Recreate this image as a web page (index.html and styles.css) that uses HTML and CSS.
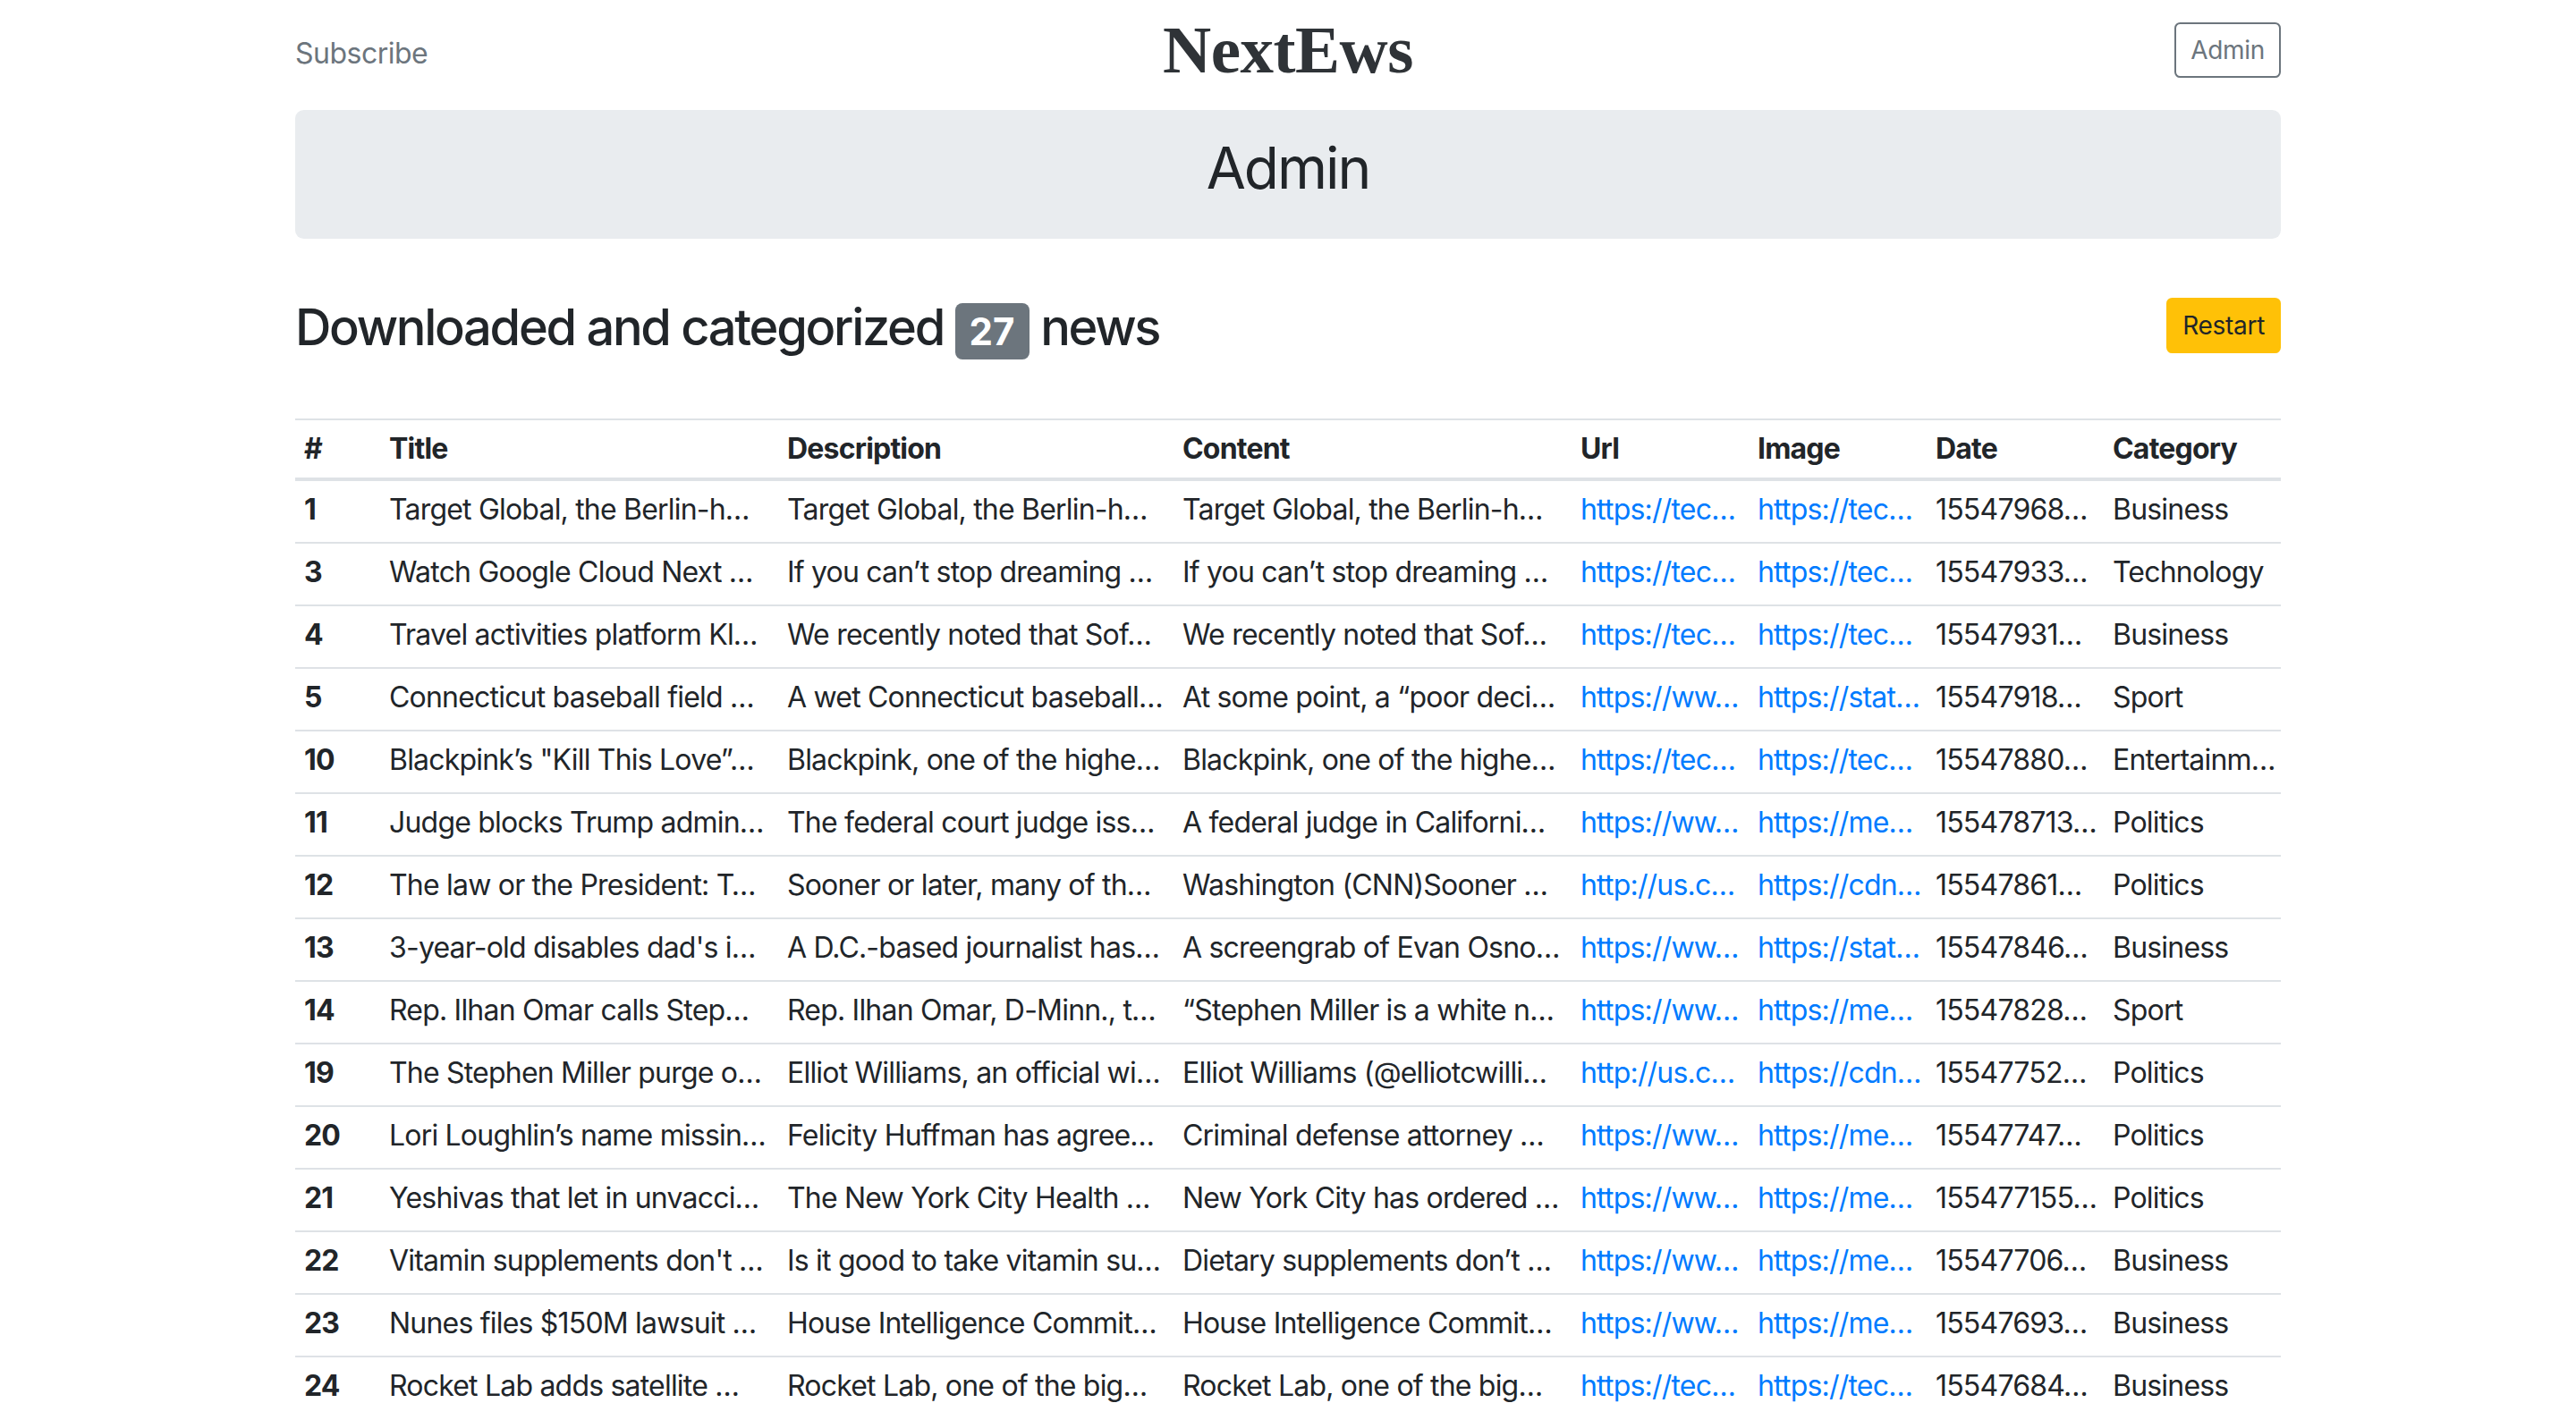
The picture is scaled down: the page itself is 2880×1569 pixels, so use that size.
FILE: index.html
```html
<!DOCTYPE html>
<html lang="en">
<head>
<meta charset="utf-8">
<title>NextEws - Admin</title>
<link rel="stylesheet" href="styles.css">
</head>
<body>
<div class="container">
  <header class="blog-header">
    <div class="header-left"><a class="subscribe" href="#">Subscribe</a></div>
    <div class="header-center"><a class="logo" href="#">NextEws</a></div>
    <div class="header-right"><a class="btn btn-outline" href="#">Admin</a></div>
  </header>

  <div class="jumbotron"><h2 class="jumbo-title">Admin</h2></div>

  <div class="toolbar">
    <h3 class="section-title">Downloaded and categorized <span class="badge">27</span> news</h3>
    <button class="btn btn-warning">Restart</button>
  </div>

  <table class="news-table">
    <colgroup>
      <col class="c-id"><col class="c-long"><col class="c-long2"><col class="c-long"><col class="c-short"><col class="c-short2"><col class="c-short"><col class="c-short">
    </colgroup>
    <thead>
      <tr><th>#</th><th>Title</th><th>Description</th><th>Content</th><th>Url</th><th>Image</th><th>Date</th><th>Category</th></tr>
    </thead>
    <tbody>
      <tr><th>1</th><td>Target Global, the Berlin-h…</td><td>Target Global, the Berlin-h…</td><td>Target Global, the Berlin-h…</td><td><a href="#">https://tec…</a></td><td><a href="#">https://tec…</a></td><td>15547968…</td><td>Business</td></tr>
      <tr><th>3</th><td>Watch Google Cloud Next …</td><td>If you can’t stop dreaming …</td><td>If you can’t stop dreaming …</td><td><a href="#">https://tec…</a></td><td><a href="#">https://tec…</a></td><td>15547933…</td><td>Technology</td></tr>
      <tr><th>4</th><td>Travel activities platform Kl…</td><td>We recently noted that Sof…</td><td>We recently noted that Sof…</td><td><a href="#">https://tec…</a></td><td><a href="#">https://tec…</a></td><td>15547931…</td><td>Business</td></tr>
      <tr><th>5</th><td>Connecticut baseball field …</td><td>A wet Connecticut baseball…</td><td>At some point, a “poor deci…</td><td><a href="#">https://ww…</a></td><td><a href="#">https://stat…</a></td><td>15547918…</td><td>Sport</td></tr>
      <tr><th>10</th><td>Blackpink’s "Kill This Love”…</td><td>Blackpink, one of the highe…</td><td>Blackpink, one of the highe…</td><td><a href="#">https://tec…</a></td><td><a href="#">https://tec…</a></td><td>15547880…</td><td>Entertainm…</td></tr>
      <tr><th>11</th><td>Judge blocks Trump admin…</td><td>The federal court judge iss…</td><td>A federal judge in Californi…</td><td><a href="#">https://ww…</a></td><td><a href="#">https://me…</a></td><td>155478713…</td><td>Politics</td></tr>
      <tr><th>12</th><td>The law or the President: T…</td><td>Sooner or later, many of th…</td><td>Washington (CNN)Sooner …</td><td><a href="#">http://us.c…</a></td><td><a href="#">https://cdn…</a></td><td>15547861…</td><td>Politics</td></tr>
      <tr><th>13</th><td>3-year-old disables dad's i…</td><td>A D.C.-based journalist has…</td><td>A screengrab of Evan Osno…</td><td><a href="#">https://ww…</a></td><td><a href="#">https://stat…</a></td><td>15547846…</td><td>Business</td></tr>
      <tr><th>14</th><td>Rep. Ilhan Omar calls Step…</td><td>Rep. Ilhan Omar, D-Minn., t…</td><td>“Stephen Miller is a white n…</td><td><a href="#">https://ww…</a></td><td><a href="#">https://me…</a></td><td>15547828…</td><td>Sport</td></tr>
      <tr><th>19</th><td>The Stephen Miller purge o…</td><td>Elliot Williams, an official wi…</td><td>Elliot Williams (@elliotcwilli…</td><td><a href="#">http://us.c…</a></td><td><a href="#">https://cdn…</a></td><td>15547752…</td><td>Politics</td></tr>
      <tr><th>20</th><td>Lori Loughlin’s name missin…</td><td>Felicity Huffman has agree…</td><td>Criminal defense attorney …</td><td><a href="#">https://ww…</a></td><td><a href="#">https://me…</a></td><td>15547747…</td><td>Politics</td></tr>
      <tr><th>21</th><td>Yeshivas that let in unvacci…</td><td>The New York City Health …</td><td>New York City has ordered …</td><td><a href="#">https://ww…</a></td><td><a href="#">https://me…</a></td><td>155477155…</td><td>Politics</td></tr>
      <tr><th>22</th><td>Vitamin supplements don't …</td><td>Is it good to take vitamin su…</td><td>Dietary supplements don’t …</td><td><a href="#">https://ww…</a></td><td><a href="#">https://me…</a></td><td>15547706…</td><td>Business</td></tr>
      <tr><th>23</th><td>Nunes files $150M lawsuit …</td><td>House Intelligence Commit…</td><td>House Intelligence Commit…</td><td><a href="#">https://ww…</a></td><td><a href="#">https://me…</a></td><td>15547693…</td><td>Business</td></tr>
      <tr><th>24</th><td>Rocket Lab adds satellite …</td><td>Rocket Lab, one of the big…</td><td>Rocket Lab, one of the big…</td><td><a href="#">https://tec…</a></td><td><a href="#">https://tec…</a></td><td>15547684…</td><td>Business</td></tr>
    </tbody>
  </table>
</div>
</body>
</html>
```

FILE: styles.css
```css
html, body {
  margin: 0;
  padding: 0;
  background: #fff;
}
body {
  font-family: Inter, "Liberation Sans", Arial, sans-serif;
  font-size: 32px;
  line-height: 1.5;
  color: #212529;
}
a {
  text-decoration: none;
}
.container {
  width: 2220px;
  margin: 0 auto;
}

/* header */
.blog-header {
  display: grid;
  grid-template-columns: 1fr 1fr 1fr;
  align-items: center;
  height: 72px;
  padding: 20px 0 31px;
  line-height: 1;
}
.header-left {
  padding-top: 8px;
}
.subscribe {
  color: #6c757d;
  font-size: 32px;
  letter-spacing: -0.5px;
}
.header-center {
  text-align: center;
}
.logo {
  font-family: "Liberation Serif", "Times New Roman", serif;
  font-size: 75px;
  line-height: 72px;
  font-weight: 700;
  color: #2f3337;
  letter-spacing: -0.5px;
}
.header-right {
  display: flex;
  justify-content: flex-end;
}
.btn {
  display: inline-block;
  font-family: Inter, "Liberation Sans", sans-serif;
  font-size: 28px;
  line-height: 42px;
  padding: 8px 16px;
  border-radius: 6.4px;
  border: 2px solid transparent;
  letter-spacing: -0.3px;
}
.btn-outline {
  color: #6c757d;
  border-color: #6c757d;
  background: #fff;
}
.btn-warning {
  color: #212529;
  background: #ffc107;
  border-color: #ffc107;
  cursor: pointer;
}

/* jumbotron */
.jumbotron {
  background: #e9ecef;
  border-radius: 9.6px;
  padding: 27px 0 40px;
  text-align: center;
}
.jumbo-title {
  margin: 0;
  font-size: 64px;
  line-height: 76.8px;
  font-weight: 400;
  letter-spacing: -2px;
}

/* toolbar */
.toolbar {
  display: flex;
  justify-content: space-between;
  align-items: flex-start;
  margin-top: 66px;
}
.section-title {
  margin: 0;
  font-size: 56px;
  line-height: 67.2px;
  font-weight: 500;
  letter-spacing: -2.3px;
}
.badge {
  display: inline-block;
  font-size: 42px;
  line-height: 1;
  font-weight: 700;
  padding: 10.5px 16px;
  border-radius: 8px;
  background: #6c757d;
  color: #fff;
  letter-spacing: 0;
  vertical-align: baseline;
}

/* table */
.news-table {
  margin-top: 66px;
  width: 2220px;
  table-layout: fixed;
  border-collapse: separate;
  border-spacing: 0;
}
.c-id { width: 95px; }
.c-long { width: 445px; }
.c-long2 { width: 442px; }
.c-short { width: 198px; }
.c-short2 { width: 199px; }
.news-table th,
.news-table td {
  text-align: left;
  white-space: nowrap;
  overflow: visible;
  line-height: 48px;
  letter-spacing: -0.8px;
}
.news-table thead th {
  font-weight: 700;
  padding: 8px 10px;
  border-top: 2px solid #dee2e6;
  border-bottom: 4px solid #dee2e6;
}
.news-table tbody th,
.news-table tbody td {
  padding: 8px 10px 12px;
  border-top: 2px solid #dee2e6;
}
.news-table tbody th {
  font-weight: 700;
}
.news-table tbody tr:first-child th,
.news-table tbody tr:first-child td {
  border-top: 0;
}
.news-table a {
  color: #007bff;
}
```
